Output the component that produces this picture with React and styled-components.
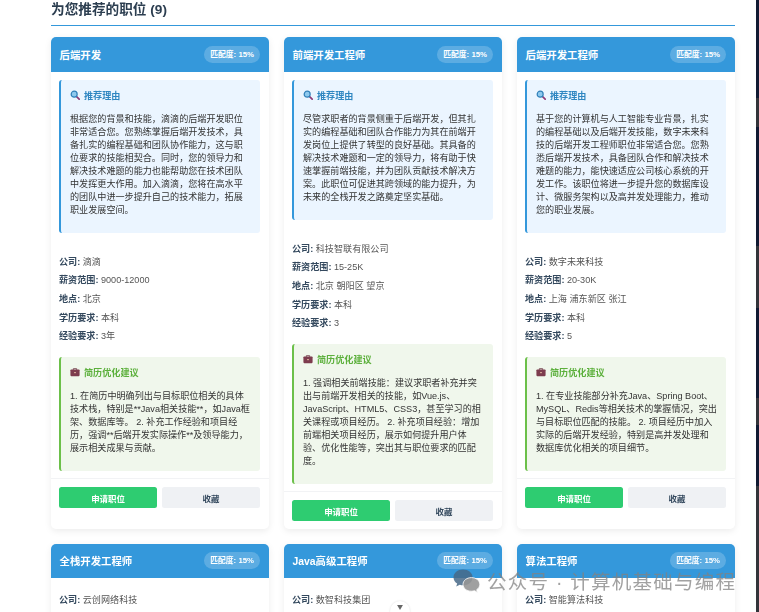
import React from 'react';
import styled, { createGlobalStyle } from 'styled-components';

const GlobalStyle = createGlobalStyle`
    html, body {
        margin: 0;
        padding: 0;
        height: 612px;
        overflow: hidden;
        background: #fff;
    }
    * {
        box-sizing: border-box;
    }
`;

const Page = styled.div`
    position: relative;
    display: flex;
    flex-direction: row;
    width: 759px;
    height: 612px;
    overflow: hidden;
    font-family: "Liberation Sans", "Noto Sans CJK SC", sans-serif;
`;

const Main = styled.div`
    flex: 1;
    padding: 0 21px 0 51px;
    filter: blur(0.3px);
`;

const Heading = styled.h2`
    margin: 0 0 11.5px;
    height: 25.6px;
    padding-top: 2px;
    font-size: 13.65px;
    line-height: 16px;
    font-weight: bold;
    color: #2c3e50;
    border-bottom: 1.3px solid #3498db;
`;

const Grid = styled.div`
    display: grid;
    grid-template-columns: repeat(3, 1fr);
    gap: 15px;
`;

const Card = styled.div`
    display: flex;
    flex-direction: column;
    background: #fff;
    border-radius: 5px;
    box-shadow: 0 2px 7px rgba(0, 0, 0, 0.08);
    overflow: hidden;
`;

const CardHeader = styled.div`
    display: flex;
    align-items: center;
    justify-content: space-between;
    height: 34.5px;
    padding: 0 9px 0 8.5px;
    background: #3498db;
    color: #fff;
`;

const CardTitle = styled.div`
    font-size: 10.4px;
    font-weight: bold;
`;

const Badge = styled.span`
    padding: 4px 6px;
    border-radius: 10px;
    background: rgba(255, 255, 255, 0.2);
    font-size: 7.8px;
    line-height: 9px;
    font-weight: bold;
    white-space: nowrap;
`;

const CardBody = styled.div`
    padding: 8.5px 9px 7.5px 8px;
`;

const Callout = styled.div`
    padding: 8px 9px 16px 9px;
    border-left: 2px solid ${(p) => p.$accent};
    border-radius: 3px;
    background: ${(p) => p.$bg};
`;

const CalloutTitle = styled.div`
    display: flex;
    align-items: center;
    gap: 4px;
    height: 13px;
    margin-bottom: 11.5px;
    font-size: 9.1px;
    font-weight: bold;
    color: ${(p) => p.$color};
`;

const CalloutText = styled.div`
    font-size: 9.1px;
    line-height: 13px;
    color: #333;
`;

const InfoList = styled.div`
    padding: ${(p) => (p.$compact ? '7px' : '23px')} 0 8px;
`;

const InfoRow = styled.div`
    height: 18.7px;
    font-size: 9.1px;
    line-height: 13px;
    color: #555;

    strong {
        color: #34495e;
    }
`;

const Footer = styled.div`
    display: flex;
    gap: 5px;
    padding: 8px 9px 7.5px 8px;
    border-top: 1px solid #f2f3f5;
`;

const Button = styled.button`
    flex: 1;
    height: 21px;
    padding: 0;
    border: none;
    border-radius: 2.5px;
    font-family: inherit;
    font-size: 8.45px;
    font-weight: bold;
    color: ${(p) => (p.$primary ? '#fff' : '#34495e')};
    background: ${(p) => (p.$primary ? '#2ecc71' : '#eff1f4')};
`;

const Strip = styled.div`
    display: flex;
    flex-direction: column;
    width: 3px;
`;

const StripPart = styled.div`
    height: ${(p) => p.$h}px;
    background: ${(p) => p.$color};
`;

const Watermark = styled.div`
    position: absolute;
    left: 453px;
    top: 568px;
    display: flex;
    align-items: center;
    gap: 7px;
    height: 25px;
    font-size: 19.5px;
    letter-spacing: 1.25px;
    color: rgba(130, 130, 130, 0.75);
    white-space: nowrap;
`;

const ScrollHint = styled.div`
    position: absolute;
    left: 390px;
    top: 601px;
    display: flex;
    justify-content: center;
    width: 20px;
    height: 20px;
    padding-top: 4px;
    border-radius: 50%;
    background: #fff;
    box-shadow: 0 0 2px rgba(0, 0, 0, 0.15);
`;

const SearchIcon = () => (
    <svg width="10" height="10" viewBox="0 0 12 12">
        <path d="M7.6 7.6 L11 11" stroke="#8e3b78" strokeWidth="2" strokeLinecap="round" />
        <circle cx="5" cy="5" r="3.6" fill="#8ec9ee" stroke="#2f7fb8" strokeWidth="1.4" />
    </svg>
);

const CaseIcon = () => (
    <svg width="10" height="10" viewBox="0 0 12 12">
        <path d="M4 3.5 V2 H8 V3.5" fill="none" stroke="#6d3b48" strokeWidth="1" />
        <rect x="0.5" y="3" width="11" height="8" rx="1" fill="#7d3c4e" />
        <rect x="5" y="6" width="2" height="1.4" fill="#e2b7a0" />
    </svg>
);

const WechatIcon = () => (
    <svg width="27" height="24" viewBox="0 0 27 24">
        <path d="M10 0.5 C4.6 0.5 0.5 4 0.5 8.4 C0.5 11 2 13.2 4.2 14.6 L3.2 17.6 L6.8 15.8 C8 16.2 9 16.3 10.4 16.3 C15.5 16.3 19.6 12.8 19.6 8.4 C19.6 4 15.4 0.5 10 0.5 Z" fill="rgba(70,105,135,0.85)" />
        <path d="M18.5 8.6 C13.6 8.6 10 11.7 10 15.4 C10 19.2 13.6 22.2 18.5 22.2 C19.6 22.2 20.5 22 21.5 21.7 L24.5 23.4 L23.7 20.7 C25.6 19.4 26.8 17.5 26.8 15.4 C26.8 11.7 23.2 8.6 18.5 8.6 Z" fill="rgba(150,150,150,0.9)" stroke="#fff" strokeWidth="0.8" />
    </svg>
);

const jobs = [
    {
        title: '后端开发',
        reason: '根据您的背景和技能，滴滴的后端开发职位非常适合您。您熟练掌握后端开发技术，具备扎实的编程基础和团队协作能力，这与职位要求的技能相契合。同时，您的领导力和解决技术难题的能力也能帮助您在技术团队中发挥更大作用。加入滴滴，您将在高水平的团队中进一步提升自己的技术能力，拓展职业发展空间。',
        info: [['公司', '滴滴'], ['薪资范围', '9000-12000'], ['地点', '北京'], ['学历要求', '本科'], ['经验要求', '3年']],
        tips: '1. 在简历中明确列出与目标职位相关的具体技术栈，特别是**Java相关技能**，如Java框架、数据库等。 2. 补充工作经验和项目经历，强调**后端开发实际操作**及领导能力，展示相关成果与贡献。',
    },
    {
        title: '前端开发工程师',
        reason: '尽管求职者的背景侧重于后端开发，但其扎实的编程基础和团队合作能力为其在前端开发岗位上提供了转型的良好基础。其具备的解决技术难题和一定的领导力，将有助于快速掌握前端技能，并为团队贡献技术解决方案。此职位可促进其跨领域的能力提升，为未来的全栈开发之路奠定坚实基础。',
        info: [['公司', '科技智联有限公司'], ['薪资范围', '15-25K'], ['地点', '北京 朝阳区 望京'], ['学历要求', '本科'], ['经验要求', '3']],
        tips: '1. 强调相关前端技能：建议求职者补充并突出与前端开发相关的技能，如Vue.js、JavaScript、HTML5、CSS3，甚至学习的相关课程或项目经历。 2. 补充项目经验：增加前端相关项目经历，展示如何提升用户体验、优化性能等，突出其与职位要求的匹配度。',
    },
    {
        title: '后端开发工程师',
        reason: '基于您的计算机与人工智能专业背景，扎实的编程基础以及后端开发技能，数字未来科技的后端开发工程师职位非常适合您。您熟悉后端开发技术，具备团队合作和解决技术难题的能力，能快速适应公司核心系统的开发工作。该职位将进一步提升您的数据库设计、微服务架构以及高并发处理能力，推动您的职业发展。',
        info: [['公司', '数字未来科技'], ['薪资范围', '20-30K'], ['地点', '上海 浦东新区 张江'], ['学历要求', '本科'], ['经验要求', '5']],
        tips: '1. 在专业技能部分补充Java、Spring Boot、MySQL、Redis等相关技术的掌握情况，突出与目标职位匹配的技能。 2. 项目经历中加入实际的后端开发经验，特别是高并发处理和数据库优化相关的项目细节。',
    },
    { title: '全栈开发工程师', info: [['公司', '云创网络科技']] },
    { title: 'Java高级工程师', info: [['公司', '数智科技集团']] },
    { title: '算法工程师', info: [['公司', '智能算法科技']] },
];

const stripParts = [
    [98, '#111a33'],
    [29, '#33343a'],
    [119, '#111a33'],
    [62, '#33343a'],
    [90, '#111a33'],
    [27, '#33343a'],
    [61, '#111a33'],
    [126, '#33343a'],
];

function JobCard({ job }) {
    return (
        <Card>
            <CardHeader>
                <CardTitle>{job.title}</CardTitle>
                <Badge>匹配度: 15%</Badge>
            </CardHeader>
            <CardBody>
                {job.reason && (
                    <Callout $accent="#3498db" $bg="#ebf5ff">
                        <CalloutTitle $color="#2e86c1"><SearchIcon />推荐理由</CalloutTitle>
                        <CalloutText>{job.reason}</CalloutText>
                    </Callout>
                )}
                <InfoList $compact={!job.reason}>
                    {job.info.map(([label, value]) => (
                        <InfoRow key={label}><strong>{label}:</strong> {value}</InfoRow>
                    ))}
                </InfoList>
                {job.tips && (
                    <Callout $accent="#6cc04a" $bg="#f0f7ec">
                        <CalloutTitle $color="#5cb03c"><CaseIcon />简历优化建议</CalloutTitle>
                        <CalloutText>{job.tips}</CalloutText>
                    </Callout>
                )}
            </CardBody>
            {job.tips && (
                <Footer>
                    <Button $primary>申请职位</Button>
                    <Button>收藏</Button>
                </Footer>
            )}
        </Card>
    );
}

export default function App() {
    return (
        <Page>
            <GlobalStyle />
            <Main>
                <Heading>为您推荐的职位 (9)</Heading>
                <Grid>
                    {jobs.map((job) => (
                        <JobCard key={job.title} job={job} />
                    ))}
                </Grid>
            </Main>
            <Strip>
                {stripParts.map(([h, color], i) => (
                    <StripPart key={i} $h={h} $color={color} />
                ))}
            </Strip>
            <ScrollHint>
                <svg width="6" height="5" viewBox="0 0 7 6"><path d="M0 0 H7 L3.5 6 Z" fill="#666" /></svg>
            </ScrollHint>
            <Watermark><WechatIcon />公众号 · 计算机基础与编程</Watermark>
        </Page>
    );
}
